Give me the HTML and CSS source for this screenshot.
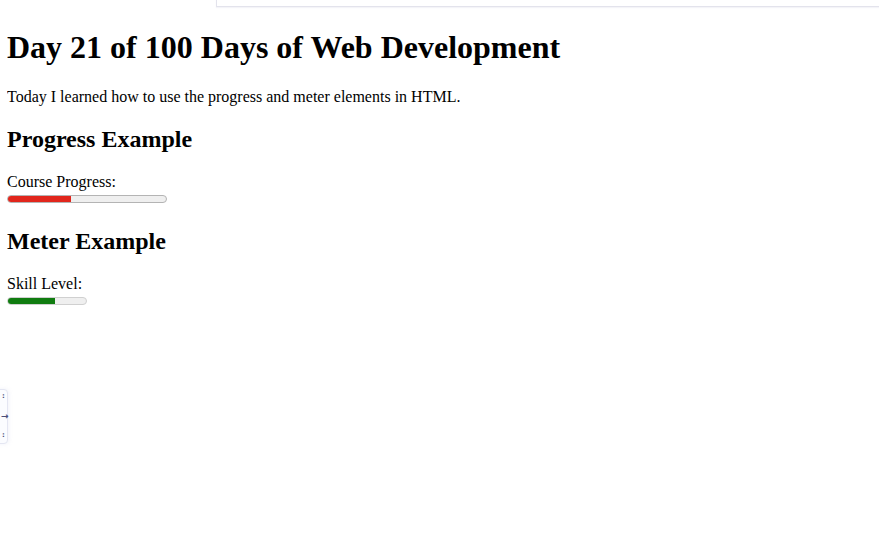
FILE: index.html
```html
<!DOCTYPE html>
<html>
<head>
<meta charset="utf-8">
<title>Day 21</title>
<link rel="stylesheet" href="styles.css">
</head>
<body>
<div class="frame"></div>
<main class="page">
  <h1>Day 21 of 100 Days of Web Development</h1>
  <p>Today I learned how to use the progress and meter elements in HTML.</p>
  <h2>Progress Example</h2>
  <p class="item">
    <label>Course Progress:</label>
    <span class="bar bar-progress" role="progressbar" aria-valuenow="40" aria-valuemax="100"><span class="fill fill-red" style="width:40%"></span></span>
  </p>
  <h2>Meter Example</h2>
  <p class="item">
    <label>Skill Level:</label>
    <span class="bar bar-meter" role="meter" aria-valuenow="60" aria-valuemax="100"><span class="fill fill-green" style="width:60%"></span></span>
  </p>
</main>
<div class="side-tab">
  <span class="dots">:</span>
  <span class="arrow">&rarr;</span>
  <span class="dots">:</span>
</div>
</body>
</html>
```
FILE: styles.css
```css
html, body {
  background: #ffffff;
}
body {
  margin: 8px 8px 8px 7px;
  font-family: "Liberation Serif", "Times New Roman", serif;
  font-size: 16px;
  color: #000;
}
.page {
  display: flow-root;
}
h1 {
  font-size: 32px;
  margin: 21.44px 0;
}
h2 {
  font-size: 24px;
  margin: 19.92px 0;
}
p {
  margin: 16px 0;
}
.item {
  padding-bottom: 5px;
}
.item label {
  display: block;
}
.bar {
  display: block;
  height: 8px;
  margin-top: 4px;
  box-sizing: border-box;
  border: 1px solid #b4b4b4;
  border-radius: 4px;
  background: #efefef;
  overflow: hidden;
}
.bar-progress {
  width: 160px;
}
.bar-meter {
  width: 80px;
  border-color: #d0d0d0;
}
.fill {
  display: block;
  height: 100%;
}
.fill-red {
  background: #e1261c;
}
.fill-green {
  background: #107c10;
}
.frame {
  position: absolute;
  left: 216px;
  top: -2px;
  right: -4px;
  height: 7px;
  border: 1px solid #e3e3ec;
  box-shadow: 0 1px 1px rgba(200, 200, 220, 0.2);
}
.side-tab {
  position: absolute;
  left: -8px;
  top: 389px;
  width: 16px;
  height: 55px;
  border: 1px solid #e4e6f2;
  border-radius: 4px;
  background: #fbfcff;
  box-shadow: 1px 0 4px rgba(160, 170, 220, 0.15);
  display: flex;
  flex-direction: column;
  align-items: flex-start;
  justify-content: space-between;
  padding: 1px 0 3px 8px;
  box-sizing: border-box;
  font-family: "DejaVu Sans", sans-serif;
  font-size: 7px;
  line-height: 10px;
  color: #4a4f7a;
}
.side-tab .dots {
  padding-left: 1px;
  font-weight: bold;
}
.side-tab .arrow {
  font-size: 9px;
  font-weight: bold;
}
```
